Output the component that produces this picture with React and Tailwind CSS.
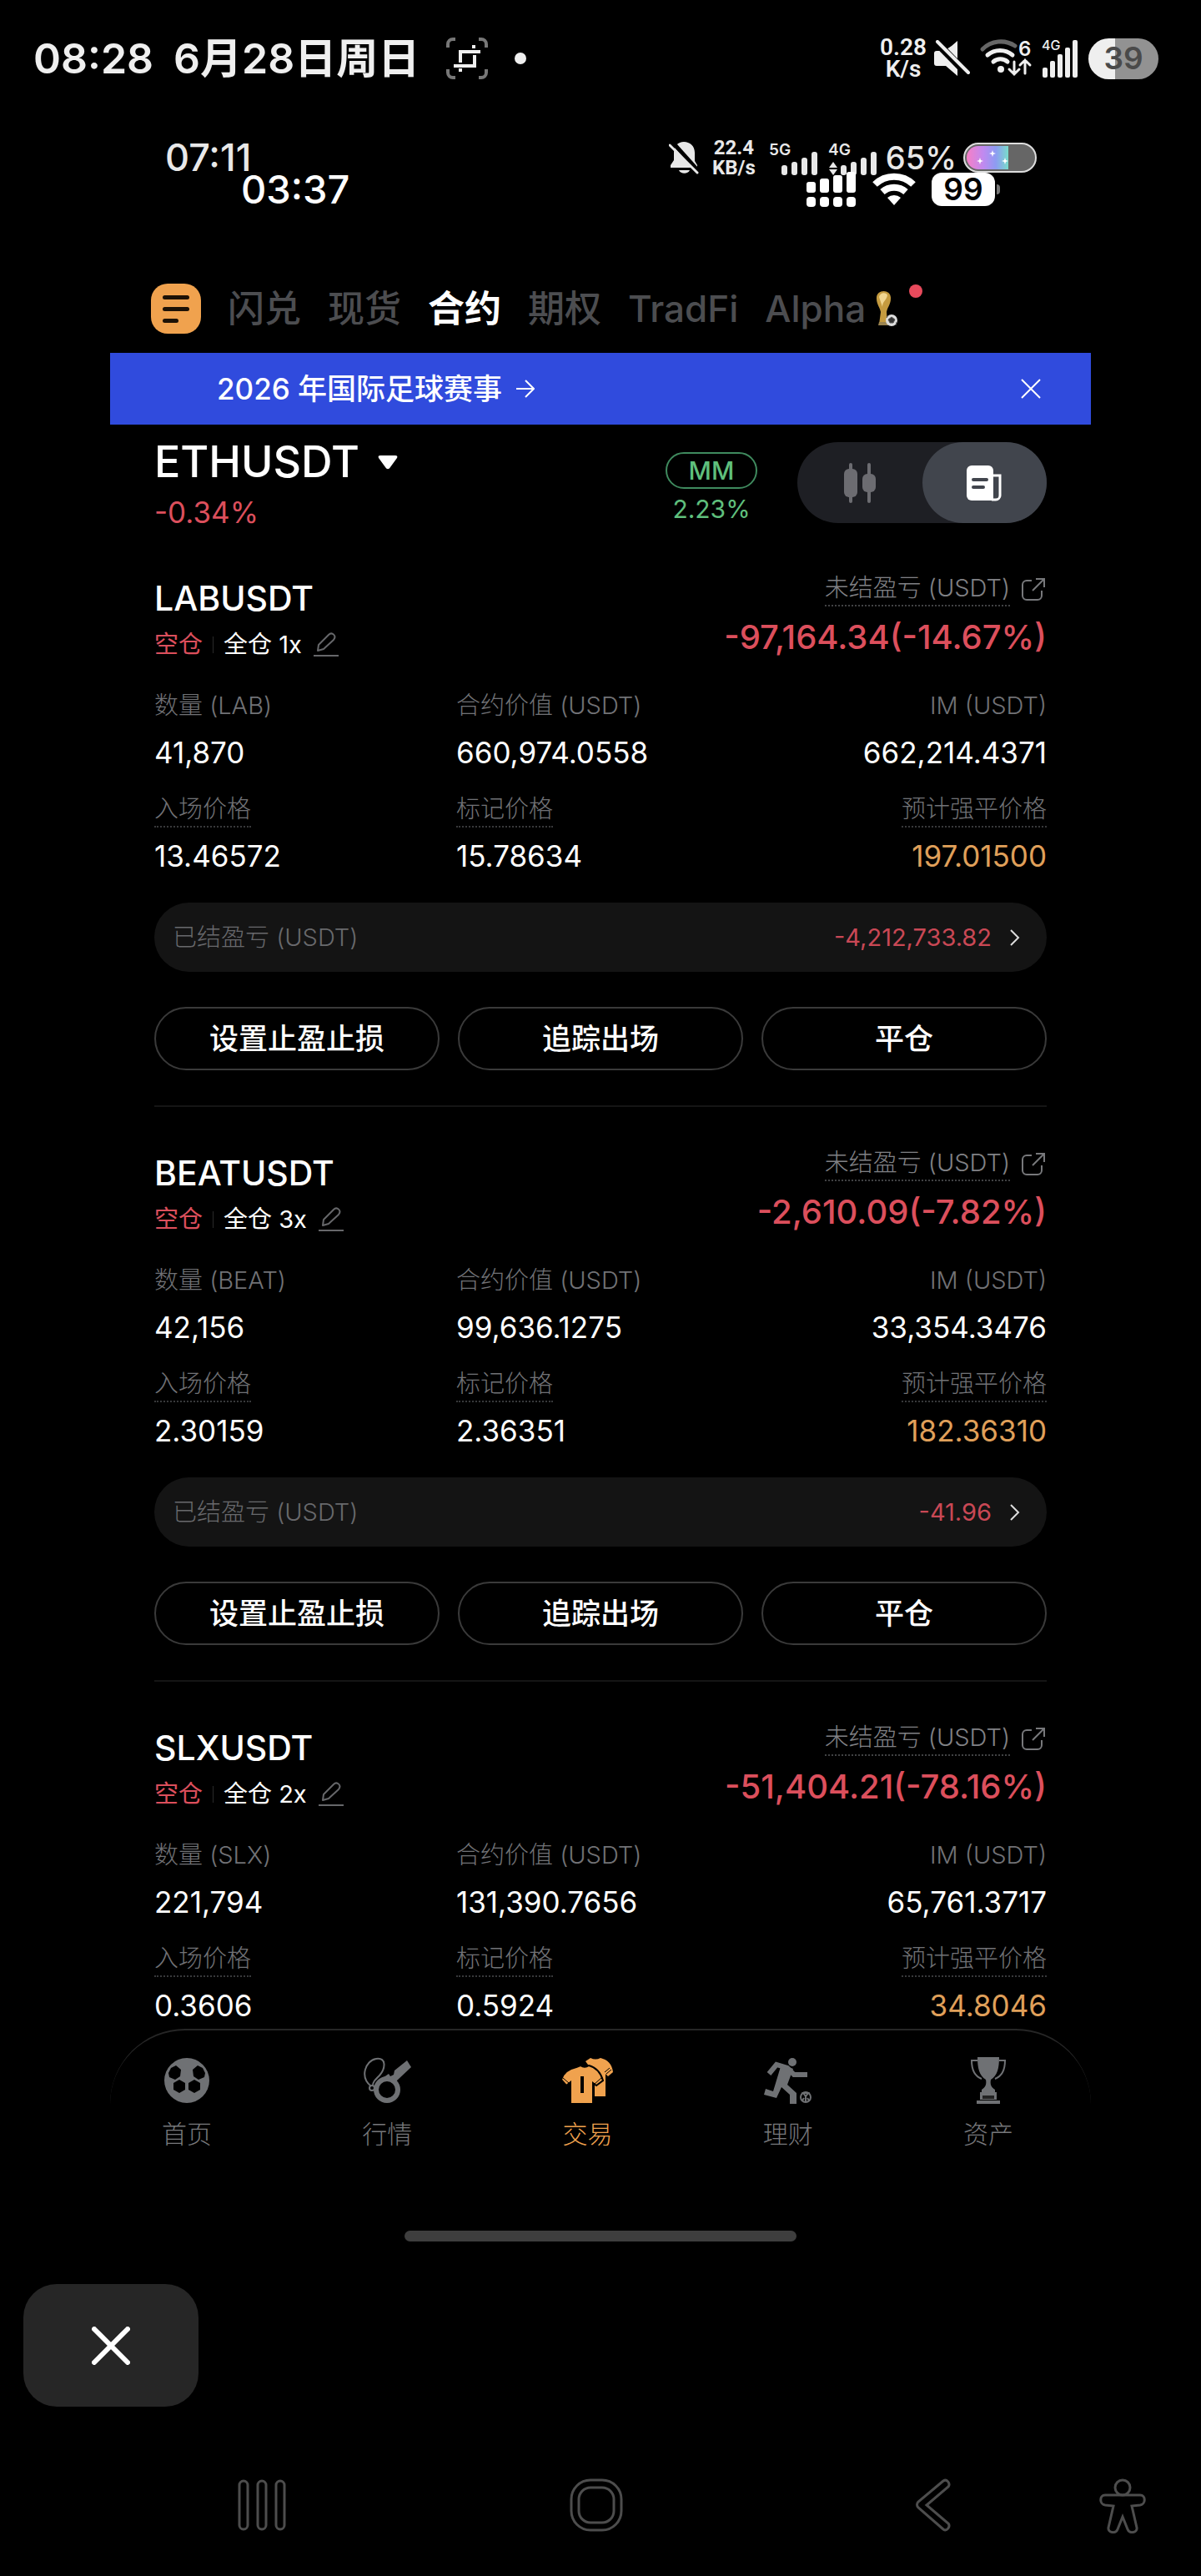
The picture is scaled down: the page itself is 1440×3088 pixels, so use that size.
import React, { useState } from "react";

const positions = [
  {
    symbol: "LABUSDT", coin: "LAB", leverage: "1x", pnl: "-97,164.34(-14.67%)",
    amount: "41,870", value: "660,974.0558", margin: "662,214.4371",
    entry: "13.46572", mark: "15.78634", liq: "197.01500", realized: "-4,212,733.82",
  },
  {
    symbol: "BEATUSDT", coin: "BEAT", leverage: "3x", pnl: "-2,610.09(-7.82%)",
    amount: "42,156", value: "99,636.1275", margin: "33,354.3476",
    entry: "2.30159", mark: "2.36351", liq: "182.36310", realized: "-41.96",
  },
  {
    symbol: "SLXUSDT", coin: "SLX", leverage: "2x", pnl: "-51,404.21(-78.16%)",
    amount: "221,794", value: "131,390.7656", margin: "65,761.3717",
    entry: "0.3606", mark: "0.5924", liq: "34.8046",
  },
];

const CropIcon = () => (
  <svg className="ml-8 shrink-0" width="50" height="50" viewBox="0 0 50 50" fill="none">
    <path d="M2 12V8a6 6 0 0 1 6-6h3M39 2h3a6 6 0 0 1 6 6v4M48 38v4a6 6 0 0 1-6 6h-3M11 48H8a6 6 0 0 1-6-6v-4" stroke="#777" strokeWidth="4" />
    <path d="M41 17H17v13M33 9v4M9 34h25V21M17 41v-4" stroke="#efefef" strokeWidth="4" />
  </svg>
);

const MuteIcon = () => (
  <svg width="44" height="44" viewBox="0 0 44 44">
    <path d="M4 13h9l9-6 7-6v42L15 31H4a3 3 0 0 1-3-3V16a3 3 0 0 1 3-3z" fill="#efefef" />
    <path d="M1 0L44 44" stroke="#000" strokeWidth="9" />
    <path d="M5 2l37 37" stroke="#efefef" strokeWidth="4" strokeLinecap="round" />
  </svg>
);

const WifiSixIcon = () => (
  <svg className="overflow-visible" width="62" height="46" viewBox="0 0 62 46" fill="none" strokeLinecap="round">
    <path d="M3 12a31 31 0 0 1 39-4" stroke="#666" strokeWidth="5" />
    <path d="M9 19a23 23 0 0 1 30 0M16 27a13 13 0 0 1 17 0" stroke="#efefef" strokeWidth="5" />
    <circle cx="25" cy="36" r="4" fill="#efefef" />
    <path d="M41 27v15m-6-6l6 6 6-6M54 41V25m-6 6l6-6 6 6" stroke="#efefef" strokeWidth="3" />
    <text x="46" y="20" fill="#efefef" fontFamily="Inter, sans-serif" fontSize="24" fontWeight="600">6</text>
  </svg>
);

const FiveBars = () => (
  <svg className="overflow-visible" width="44" height="48" viewBox="0 0 44 48" fill="#efefef">
    <rect x="1" y="35" width="6" height="12" rx="2" />
    <rect x="10" y="27" width="6" height="20" rx="2" />
    <rect x="19" y="19" width="6" height="28" rx="2" />
    <rect x="28" y="11" width="6" height="36" rx="2" />
    <rect x="37" y="2" width="6" height="45" rx="2" />
    <text x="0" y="14" fontFamily="Inter, sans-serif" fontSize="16" fontWeight="500">4G</text>
  </svg>
);

const BellOffIcon = () => (
  <svg width="36" height="40" viewBox="0 0 36 40">
    <path d="M18 1c7 0 13 5 13 13v10l3 5v3H2v-3l4-6v-9C6 6 11 1 18 1zM12 35h13c-2 5-11 5-13 0z" fill="#e8e8e8" />
    <path d="M3 0l36 40" stroke="#000" strokeWidth="5" />
    <path d="M1 5l33 33" stroke="#e8e8e8" strokeWidth="3" strokeLinecap="round" />
  </svg>
);

const NetworkIcon = ({ label, updown }) => (
  <svg className="overflow-visible" width="61" height="42" viewBox="0 0 61 42" fill="#e8e8e8">
    <text x="0" y="18" fontFamily="Inter, sans-serif" fontSize="19" fontWeight="600">{label}</text>
    {updown && <path d="M6 26l5 7H1zM6 42l5-7H1z" />}
    <rect x="15" y="30" width="7" height="12" rx="3" />
    <rect x="27" y="26" width="7" height="16" rx="3" />
    <rect x="39" y="21" width="7" height="21" rx="3" />
    <rect x="51" y="14" width="7" height="28" rx="3" />
  </svg>
);

const CellIcon = () => (
  <svg width="60" height="42" viewBox="0 0 60 42" fill="#fff">
    {[0, 16, 32, 48].map((x, i) => (
      <g key={x}>
        <rect x={x} y={12 - i * 4} width="11" height={13 + i * 4} rx="3" />
        <rect x={x} y="30" width="11" height="12" rx="4" />
      </g>
    ))}
  </svg>
);

const WifiIcon = () => (
  <svg width="52" height="40" viewBox="0 0 52 40" fill="none" stroke="#fff" strokeWidth="8">
    <path d="M3 14a33 33 0 0 1 46 0M12 23a21 21 0 0 1 28 0" />
    <path d="M26 39l-8-9a12 12 0 0 1 16 0z" fill="#fff" stroke="none" />
  </svg>
);

const SparkBattery = () => (
  <svg width="88" height="36" viewBox="0 0 88 36">
    <defs>
      <linearGradient id="spark" x1="0" x2="1">
        <stop offset="0" stopColor="#f77fc6" />
        <stop offset="0.4" stopColor="#c08af0" />
        <stop offset="0.7" stopColor="#8d9cf2" />
        <stop offset="1" stopColor="#79dccb" />
      </linearGradient>
    </defs>
    <rect x="1" y="1" width="86" height="34" rx="17" fill="#666" stroke="#ddd" strokeWidth="2" />
    <path d="M54 4v28H18a14 14 0 0 1 0-28z" fill="url(#spark)" />
    <path d="M35 9l1 3 3 1-3 1-1 3-1-3-3-1 3-1zM20 18l1 3 3 1-3 1-1 3-1-3-3-1 3-1zM50 18l1 3 3 1-3 1-1 3-1-3-3-1 3-1z" fill="#fff" />
  </svg>
);

const CupIcon = () => (
  <svg width="28" height="42" viewBox="0 0 28 42">
    <path d="M1 9C0-3 19-3 18 9c0 7-4 10-5 16l1 15H4l2-15C5 19 1 16 1 9z" fill="#c59b3f" />
    <path d="M4 7c1-6 9-6 10-2-1 6-6 7-6 14" fill="#f1d690" />
    <path d="M4 37h11v4H3z" fill="#9b8450" />
    <circle cx="19" cy="35" r="7" fill="#ddd" />
    <path d="M19 31l4 3-2 4h-4l-2-4zM13 32l2-3M24 41l1-4" fill="#333" stroke="#555" />
  </svg>
);

const CandlesIcon = () => (
  <svg width="38" height="48" viewBox="0 0 38 48" fill="#6c6c71">
    <rect x="0" y="7" width="16" height="34" rx="6" />
    <rect x="6" y="0" width="4" height="48" rx="2" />
    <rect x="22" y="13" width="16" height="22" rx="6" />
    <rect x="28" y="0" width="4" height="48" rx="2" />
  </svg>
);

const NewsIcon = () => (
  <svg width="42" height="44" viewBox="0 0 42 44">
    <path d="M6 1h20a6 6 0 0 1 6 6v36H6a6 6 0 0 1-6-6V7a6 6 0 0 1 6-6z" fill="#fff" />
    <path d="M30 13h10v24a5 5 0 0 1-5 5h-5" fill="none" stroke="#fff" strokeWidth="3" />
    <path d="M35 16v22" stroke="#41454d" strokeWidth="5" />
    <path d="M8 18h16M8 27h12" stroke="#41454d" strokeWidth="4" strokeLinecap="round" />
  </svg>
);

const EditIcon = () => (
  <svg width="30" height="30" viewBox="0 0 30 30" fill="none" stroke="#66676a" strokeWidth="2">
    <path d="M5 22l1-7L18 3c4-4 10 1 6 6L12 20z" strokeLinejoin="round" />
    <path d="M0 28h30" />
  </svg>
);

const ShareIcon = () => (
  <svg width="30" height="28" viewBox="0 0 30 28" fill="none" stroke="#77787b" strokeWidth="2">
    <path d="M12 4H6a5 5 0 0 0-5 5v13a5 5 0 0 0 5 5h13a5 5 0 0 0 5-5v-6M17 2h10v10M27 2L13 16" />
  </svg>
);

const BallIcon = () => (
  <svg width="56" height="56" viewBox="0 0 56 56">
    <circle cx="28" cy="28" r="27" fill="#6f7174" />
    <path d="M9 13l6-3 6 5-1 8-6 4-7-3-1-5zM47 13l-6-3-6 5 1 8 6 4 7-3 1-5zM19 27l7 4v8l-7 4-7-4v-8zM37 27l7 4v8l-7 4-7-4v-8z" fill="#000" />
  </svg>
);

const WhistleIcon = () => (
  <svg width="60" height="56" viewBox="0 0 60 56" fill="none">
    <circle cx="30" cy="39" r="13" stroke="#6f7174" strokeWidth="6" />
    <path d="M19 29l13-9 2 3 4-2 1-5 15-12 5 8-17 16-1 7-10-9z" fill="#6f7174" />
    <path d="M11 35C-3 24 4 4 17 2s11 12 4 20c-6 6-8 8-8 12" stroke="#6f7174" strokeWidth="2" />
    <circle cx="12" cy="37" r="3" stroke="#6f7174" strokeWidth="2" />
  </svg>
);

const ShirtsIcon = () => (
  <svg width="62" height="56" viewBox="0 0 62 56" fill="#f0a24e">
    <path d="M28 5l6-4c4 2 8 2 12 0 8 2 14 7 15 17l-6 5-3-3v27H39V20z" />
    <path d="M53 20l6-5M51 18l6-5" stroke="#000" strokeWidth="1" />
    <path d="M17 12l5-2c3 2 7 2 10 0 8 2 14 8 17 18l-8 6-4-3v25H10V30l-5 4-6-7c2-8 9-13 18-15z" stroke="#000" strokeWidth="2" />
    <path d="M1 25l7 6M39 32l8-7" stroke="#000" strokeWidth="1" />
    <path d="M22 23h4v20h-4z" fill="#000" />
  </svg>
);

const RunnerIcon = () => (
  <svg width="58" height="56" viewBox="0 0 58 56" fill="none">
    <circle cx="34" cy="6" r="5" fill="#6f7174" />
    <path d="M6 20l9-11 13 4 8 8h16" stroke="#6f7174" strokeWidth="6" />
    <path d="M21 8l14 6-7 19 11 10v13h-8V45l-10-9-6 13L0 45l2-7 9 3z" fill="#6f7174" />
    <circle cx="50" cy="48" r="6" stroke="#6f7174" strokeWidth="2" />
    <path d="M50 47l-3-4h6zM50 47v6M46 52l2-3M54 52l-2-3" stroke="#6f7174" strokeWidth="2" />
  </svg>
);

const TrophyIcon = () => (
  <svg width="44" height="56" viewBox="0 0 44 56" fill="#6f7174">
    <path d="M9 0h26c0 13-2 22-10 27-1 5 0 9 5 12v3H14v-3c5-3 6-7 5-12C11 22 9 13 9 0z" />
    <path d="M9 4H2c0 11 4 19 12 22M35 4h7c0 11-4 19-12 22" fill="none" stroke="#6f7174" strokeWidth="2" />
    <path d="M12 42h20v9H12zM8 52h28v4H8z" />
    <path d="M15 46h14v4H15z" fill="#222" />
  </svg>
);

const tabs = ["闪兑", "现货", "合约", "期权", "TradFi"];

const navItems = [
  ["首页", BallIcon],
  ["行情", WhistleIcon],
  ["交易", ShirtsIcon],
  ["理财", RunnerIcon],
  ["资产", TrophyIcon],
];

const Field = ({ label, value, dotted, right, color = "text-white" }) => (
  <div className={right ? "text-right" : ""}>
    <dt className="h-[42px] text-[29px] leading-10 font-light text-[#717276]">
      <span className={dotted ? "inline-block border-b-2 border-dotted border-[#38393b]" : ""}>{label}</span>
    </dt>
    <dd className={`mt-[14px] text-[35px] leading-10 ${color}`}>{value}</dd>
  </div>
);

const Position = ({ item }) => (
  <article className="pt-[47px]">
    <div className="flex justify-between">
      <div className="pt-[10px]">
        <h2 className="text-[41px] leading-[44px] font-medium">{item.symbol}</h2>
        <div className="mt-4 flex items-center text-[29px] leading-9">
          <span className="text-[#dc4f5c]">空仓</span>
          <span className="mx-3 h-5 w-px bg-[#2a2a2a]" />
          <span>全仓 {item.leverage}</span>
          <button aria-label="编辑杠杆" className="ml-[14px]"><EditIcon /></button>
        </div>
      </div>
      <div className="flex flex-col items-end">
        <div className="flex items-center gap-[14px] text-[29px] leading-10 font-light text-[#808185]">
          <span className="border-b-2 border-dotted border-[#414244]">未结盈亏 (USDT)</span>
          <button aria-label="分享"><ShareIcon /></button>
        </div>
        <p className="mt-[13px] text-[40px] leading-[48px] font-medium text-[#dc4f5c]">{item.pnl}</p>
      </div>
    </div>

    <dl className="mt-[35px] grid grid-cols-3 gap-x-4 gap-y-7">
      <Field label={`数量 (${item.coin})`} value={item.amount} />
      <Field label="合约价值 (USDT)" value={item.value} />
      <Field label="IM (USDT)" value={item.margin} right />
      <Field label="入场价格" value={item.entry} dotted />
      <Field label="标记价格" value={item.mark} dotted />
      <Field label="预计强平价格" value={item.liq} dotted right color="text-[#e0a05a]" />
    </dl>

    {item.realized && (
      <>
        <button className="mt-9 flex h-[83px] w-full items-center rounded-full bg-[#141414] pr-8 pl-[22px] text-[29px]">
          <span className="font-light text-[#68696c]">已结盈亏 (USDT)</span>
          <span className="ml-auto text-[#c94855]">{item.realized}</span>
          <svg className="ml-[22px]" width="12" height="20" viewBox="0 0 12 20" fill="none" stroke="#ddd" strokeWidth="2">
            <path d="M1 1l9 9-9 9" />
          </svg>
        </button>
        <div className="mt-[42px] flex gap-[22px] border-b-2 border-[#151515] pb-[42px] text-[35px] font-medium">
          <button className="h-[76px] flex-1 rounded-full border-2 border-[#3a3a3a]">设置止盈止损</button>
          <button className="h-[76px] flex-1 rounded-full border-2 border-[#3a3a3a]">追踪出场</button>
          <button className="h-[76px] flex-1 rounded-full border-2 border-[#3a3a3a]">平仓</button>
        </div>
      </>
    )}
  </article>
);

const App = () => {
  const [tab, setTab] = useState("合约");
  const [showBanner, setShowBanner] = useState(true);

  return (
    <div className="min-h-screen bg-black font-['Inter','Noto_Sans_CJK_SC',sans-serif] text-white">
      {/* device status bar */}
      <header className="flex h-[140px] items-center pr-[51px] pl-10 text-[#efefef]">
        <span className="text-[50px] font-semibold">08:28</span>
        <span className="ml-6 text-[50px] font-semibold whitespace-nowrap">6月28日周日</span>
        <CropIcon />
        <span className="ml-8 size-[14px] rounded-full bg-[#efefef]" />
        <div className="ml-auto flex items-center">
          <p className="text-center font-['Roboto'] text-[28px] leading-[26px] font-semibold">0.28<br />K/s</p>
          <div className="ml-2 flex items-center gap-3">
            <MuteIcon />
            <WifiSixIcon />
            <FiveBars />
            <span className="flex h-[49px] w-[84px] items-center justify-center rounded-full bg-linear-to-r from-[#efefef] from-38% to-[#929292] to-38% text-[37px] font-semibold text-[#4a4a4a]">39</span>
          </div>
        </div>
      </header>

      <main className="px-[132px]">
        <div className="mt-7 flex h-[42px] items-center pr-[65px] pl-[66px] text-[#e8e8e8]">
          <span className="text-[45px] font-medium">07:11</span>
          <div className="ml-auto flex items-center">
            <BellOffIcon />
            <p className="mx-4 text-center font-['Roboto'] text-[24px] leading-6 font-bold">22.4<br />KB/s</p>
            <NetworkIcon label="5G" />
            <span className="w-[10px]" />
            <NetworkIcon label="4G" updown />
            <span className="mx-2 text-[38px] font-medium">65%</span>
            <SparkBattery />
          </div>
        </div>
        <div className="-mt-1 flex h-[42px] items-center pr-[109px] pl-[157px]">
          <span className="text-[47px] font-medium">03:37</span>
          <div className="ml-auto flex items-center gap-[19px]">
            <CellIcon />
            <WifiIcon />
            <div className="flex items-center gap-[2px]">
              <span className="flex h-10 w-[76px] items-center justify-center rounded-xl bg-white text-[37px] font-semibold text-black">99</span>
              <span className="h-3 w-1 rounded-r-full bg-[#777]" />
            </div>
          </div>
        </div>

        <nav className="mt-[73px] flex h-[102px] items-center gap-8 pb-1 pl-[49px] text-[44px] font-medium">
          <button aria-label="菜单" className="flex size-[60px] flex-col justify-center gap-[9px] rounded-[20px] bg-[#f0a24e] pl-[14px]">
            <span className="h-[5px] w-8 rounded-full bg-[#1d1206]" />
            <span className="h-[5px] w-8 rounded-full bg-[#1d1206]" />
            <span className="h-[5px] w-[19px] rounded-full bg-[#1d1206]" />
          </button>
          {tabs.map((name) => (
            <button key={name} onClick={() => setTab(name)} className={tab === name ? "font-semibold text-white" : "text-[#4c4d50]"}>{name}</button>
          ))}
          <button className="relative flex items-center gap-3 text-[#4c4d50]">
            Alpha
            <CupIcon />
            <span className="absolute top-1 -right-[28px] size-4 rounded-full bg-[#e84a5c]" />
          </button>
        </nav>

        {showBanner && (
          <div className="flex h-[86px] items-center bg-[#304bdd] pr-[60px] pl-32">
            <a href="#event" className="flex items-center gap-[17px] text-[35px] font-medium">
              2026 年国际足球赛事
              <svg width="22" height="22" viewBox="0 0 22 22" fill="none" stroke="#fff" strokeWidth="2"><path d="M0 11h21M11 1l10 10-10 10" /></svg>
            </a>
            <button aria-label="关闭" className="ml-auto" onClick={() => setShowBanner(false)}>
              <svg width="24" height="24" viewBox="0 0 24 24" stroke="#fff" strokeWidth="2"><path d="M1 1l22 22M23 1L1 23" /></svg>
            </button>
          </div>
        )}

        <div className="px-[53px]">
          <section className="flex h-[129px] items-start pt-[21px]">
            <div>
              <button className="flex items-center gap-[22px] text-[52px] leading-[48px] font-medium">
                ETHUSDT
                <svg width="24" height="18" viewBox="0 0 24 18" fill="#fff"><path d="M3 1h18c2 0 3 1 2 3l-8 11c-2 3-4 3-6 0L1 4C0 2 1 1 3 1z" /></svg>
              </button>
              <p className="mt-3 text-[35px] leading-[48px] text-[#dc4f5c]">-0.34%</p>
            </div>
            <div className="mt-3 ml-auto flex flex-col items-center text-[30px] text-[#5fbf7c]">
              <span className="flex h-[44px] w-[110px] items-center justify-center rounded-full border-2 border-[#3f8a5e] font-medium">MM</span>
              <span className="mt-[6px] leading-9">2.23%</span>
            </div>
            <div className="ml-12 flex h-[97px] w-[299px] rounded-full bg-[#1e1f24]">
              <button aria-label="K线" className="flex flex-1 items-center justify-center"><CandlesIcon /></button>
              <button aria-label="交易" className="flex flex-1 items-center justify-center rounded-full bg-[#41454d]"><NewsIcon /></button>
            </div>
          </section>

          {positions.map((item) => <Position key={item.symbol} item={item} />)}
        </div>

        <nav className="mt-2 flex h-[170px] justify-between rounded-t-[90px] border-t-2 border-[#262626] pt-8 pr-[93px] pl-[62px]">
          {navItems.map(([name, Icon]) => (
            <a key={name} href={`#${name}`} className={`flex w-[60px] flex-col items-center text-[30px] leading-10 font-light ${name === "交易" ? "text-[#f0a24e]" : "text-[#77787b]"}`}>
              <Icon />
              <span className="mt-4">{name}</span>
            </a>
          ))}
        </nav>
        <div className="mx-auto mt-[72px] h-[13px] w-[470px] rounded-full bg-[#3e3e3e]" />
      </main>

      <button aria-label="退出" className="mt-[51px] ml-7 flex h-[147px] w-[210px] items-center justify-center rounded-[40px] bg-[#262626]">
        <svg width="46" height="46" viewBox="0 0 46 46" stroke="#fff" strokeWidth="6" strokeLinecap="round"><path d="M3 3l40 40M43 3L3 43" /></svg>
      </button>

      {/* android navigation keys */}
      <footer className="mt-[86px] flex h-[115px] items-start pr-[66px] pl-[284px]">
        <button aria-label="最近">
          <svg width="60" height="64" viewBox="0 0 60 64" fill="none" stroke="#4d4d4d" strokeWidth="3">
            <rect x="3" y="3" width="10" height="58" rx="5" />
            <rect x="25" y="3" width="10" height="58" rx="5" />
            <rect x="47" y="3" width="10" height="58" rx="5" />
          </svg>
        </button>
        <button aria-label="主页" className="ml-[339px]">
          <svg width="64" height="64" viewBox="0 0 64 64" fill="none" stroke="#4d4d4d" strokeWidth="3">
            <rect x="2" y="2" width="60" height="60" rx="23" />
            <rect x="11" y="11" width="42" height="42" rx="14" />
          </svg>
        </button>
        <button aria-label="返回" className="ml-auto">
          <svg width="42" height="64" viewBox="0 0 42 64" fill="none" stroke="#4d4d4d" strokeWidth="3">
            <path d="M33 3L3 28c-2 2-2 5 0 7l30 26c4 3 9-3 6-7L13 32 39 10c3-4-2-10-6-7z" />
          </svg>
        </button>
        <button aria-label="无障碍" className="ml-[178px]">
          <svg width="56" height="66" viewBox="0 0 56 66" fill="none" stroke="#4d4d4d" strokeWidth="3">
            <circle cx="28" cy="11" r="9" />
            <path d="M7 20h42c7 0 7 11 0 12l-10 1 6 26c1 6-9 8-11 2l-6-15-6 15c-2 6-12 4-11-2l6-26-10-1c-7-1-7-12 0-12z" />
          </svg>
        </button>
      </footer>
    </div>
  );
};

export default App;
